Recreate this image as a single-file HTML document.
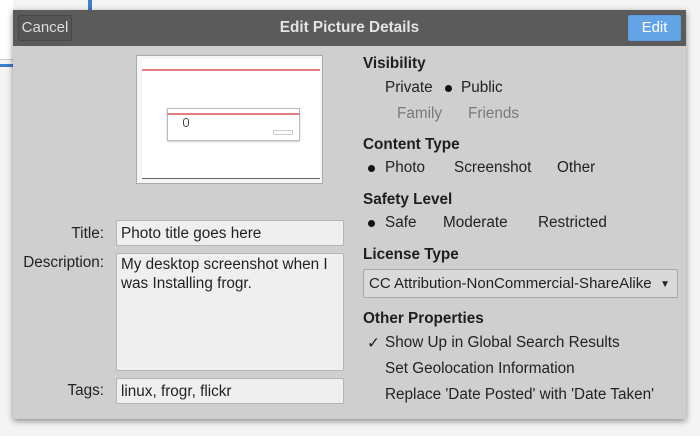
<!DOCTYPE html>
<html><head><style>
*{margin:0;padding:0;box-sizing:border-box}
body{width:700px;height:436px;background:#f4f4f4;position:relative;overflow:hidden;font-family:"Liberation Sans",sans-serif;font-size:14px;color:#222}
.a{position:absolute;white-space:nowrap}
.dlg{position:absolute;left:13px;top:10px;width:673px;height:409px;background:#cfcfcf;box-shadow:0 2px 6px rgba(0,0,0,.45)}
.hdr{position:absolute;left:0;top:0;width:673px;height:36px;background:#5b5b5b}
.h{font-weight:bold;font-size:15.3px;color:#1e1e1e}
.ent{position:absolute;background:#efefef;border:1px solid #b5b5b5;border-radius:2px;padding:4px 4px;font-size:15.3px}
.lb{font-size:15.3px}
.dot{position:absolute;width:7px;height:7px;border-radius:50%;background:#111}
.g{color:#7a7a7a}
</style></head><body>
<div class="a" style="left:0;top:0;width:13px;height:60px;background:#fff;border-bottom:1px solid #ccc"></div>
<div class="a" style="left:0;top:64px;width:13px;height:3px;background:#3f7ccc"></div>
<div class="a" style="left:88px;top:0;width:4px;height:10px;background:#3f7ccc"></div>
<div class="dlg">
 <div class="hdr"></div>
 <div class="a" style="left:5px;top:5px;width:54px;height:26px;border:1px solid #484848;background:#555;border-radius:2px;color:#ddd;text-align:center;line-height:24px;font-size:15px">Cancel</div>
 <div class="a" style="left:0;width:673px;top:9px;text-align:center;color:#e4e4e4;font-weight:bold;font-size:15.3px">Edit Picture Details</div>
 <div class="a" style="left:615px;top:5px;width:53px;height:26px;background:#62a4e6;border:1px solid #5a9ade;border-radius:2px;color:#fff;text-align:center;line-height:24px;font-size:15px">Edit</div>
 <div class="a" style="left:123px;top:45px;width:187px;height:129px;background:#f6f6f6;border:1px solid #aaa">
  <div class="a" style="left:5px;top:3px;width:178px;height:120px;background:#fff;border-bottom:1px solid #666"></div>
  <div class="a" style="left:5px;top:13px;width:178px;height:2px;background:#e08080"></div>
  <div class="a" style="left:30px;top:52px;width:133px;height:33px;border:1px solid #bbb;background:#fff;box-shadow:0 1px 2px rgba(0,0,0,.2)"></div>
  <div class="a" style="left:30px;top:57px;width:133px;height:2px;background:#e08080"></div>
  <div class="a" style="left:46px;top:62px;width:6px;height:9px;border:1px solid #444;border-radius:3px"></div>
  <div class="a" style="left:136px;top:74px;width:20px;height:5px;border:1px solid #ccc"></div>
 </div>
 <div class="a h" style="left:350px;top:45px">Visibility</div>
 <div class="a lb" style="left:372px;top:69px">Private</div>
 <div class="dot" style="left:432px;top:75px"></div>
 <div class="a lb" style="left:448px;top:69px">Public</div>
 <div class="a g lb" style="left:384px;top:95px">Family</div>
 <div class="a g lb" style="left:455px;top:95px">Friends</div>
 <div class="a h" style="left:350px;top:126px">Content Type</div>
 <div class="dot" style="left:355px;top:155px"></div>
 <div class="a lb" style="left:372px;top:149px">Photo</div>
 <div class="a lb" style="left:441px;top:149px">Screenshot</div>
 <div class="a lb" style="left:544px;top:149px">Other</div>
 <div class="a h" style="left:350px;top:181px">Safety Level</div>
 <div class="dot" style="left:355px;top:210px"></div>
 <div class="a lb" style="left:372px;top:204px">Safe</div>
 <div class="a lb" style="left:430px;top:204px">Moderate</div>
 <div class="a lb" style="left:525px;top:204px">Restricted</div>
 <div class="a h" style="left:350px;top:236px">License Type</div>
 <div class="a" style="left:350px;top:259px;width:315px;height:29px;background:#d9d9d9;border:1px solid #a8a8a8;border-radius:2px;padding:5px 5px;font-size:15px">CC Attribution-NonCommercial-ShareAlike<span style="position:absolute;right:7px;top:9px;font-size:10px">▼</span></div>
 <div class="a h" style="left:350px;top:300px">Other Properties</div>
 <div class="a lb" style="left:354px;top:324px">✓</div>
 <div class="a lb" style="left:372px;top:324px">Show Up in Global Search Results</div>
 <div class="a lb" style="left:372px;top:350px">Set Geolocation Information</div>
 <div class="a lb" style="left:372px;top:376px">Replace 'Date Posted' with 'Date Taken'</div>
 <div class="a lb" style="right:582px;top:215px">Title:</div>
 <div class="a lb" style="right:582px;top:244px">Description:</div>
 <div class="a lb" style="right:582px;top:372px">Tags:</div>
 <div class="ent" style="left:103px;top:210px;width:228px;height:26px">Photo title goes here</div>
 <div class="ent" style="left:103px;top:243px;width:228px;height:118px;padding-top:1px;line-height:19px">My desktop screenshot when I<br>was Installing frogr.</div>
 <div class="ent" style="left:103px;top:368px;width:228px;height:26px">linux, frogr, flickr</div>
</div>
</body></html>
